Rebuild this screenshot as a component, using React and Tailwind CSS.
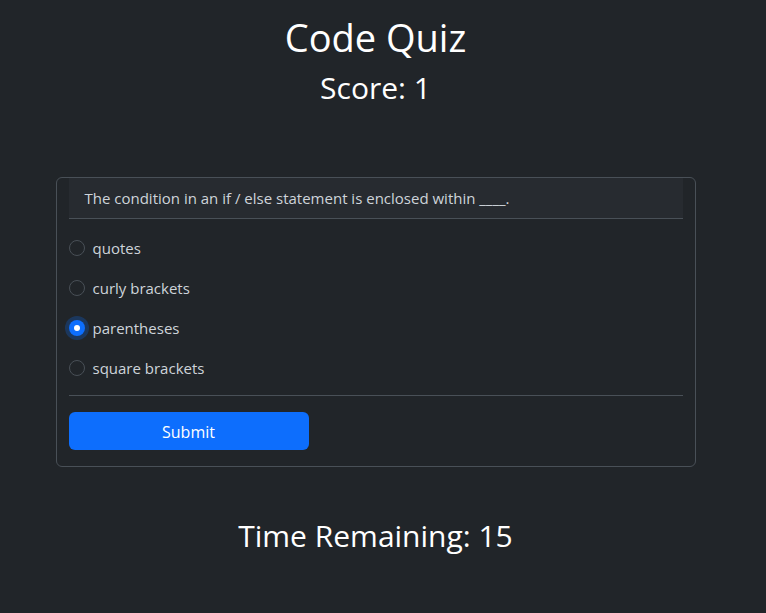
import React, {useState} from "react";

const options = ["quotes", "curly brackets", "parentheses", "square brackets"];

const App = () => {
  const [picked, setPicked] = useState("parentheses");

  return (
    <div className="min-h-screen w-full bg-[#212529] font-['Open_Sans',sans-serif] text-[#ced4da]">
      <div className="w-[751px] text-center">
        <h1 className="mb-2 pt-[13px] text-[38px] leading-[48px] text-white">Code Quiz</h1>
        <h2 className="text-[30px] leading-[38px] text-white">Score: 1</h2>

        <div className="mx-auto mt-[70px] w-[640px] rounded-md border border-[#495057] px-3 pb-4 text-left">
          <div className="border-b border-[#495057] bg-[#272b30] px-4 py-2 text-[15px] leading-[24px]">
            The condition in an if / else statement is enclosed within ____.
          </div>

          <div className="flex flex-col pt-[9px]">
            {options.map(opt => (
              <label key={opt} className="flex h-10 cursor-pointer items-center gap-2 text-[15px]">
                <span
                  className={
                    opt === picked
                      ? "flex h-4 w-4 items-center justify-center rounded-full bg-[#0d6efd] shadow-[0_0_0_4px_rgba(13,110,253,0.25)]"
                      : "h-4 w-4 rounded-full border border-[#495057] bg-[#212529]"
                  }
                >
                  {opt === picked && <span className="h-[6px] w-[6px] rounded-full bg-white" />}
                </span>
                <input
                  type="radio"
                  name="answer"
                  className="hidden"
                  checked={opt === picked}
                  onChange={() => setPicked(opt)}
                />
                {opt}
              </label>
            ))}
          </div>

          <hr className="mt-[7px] border-[#495057]" />

          <button className="mt-4 h-[38px] w-[240px] rounded-md bg-[#0d6efd] pt-[1px] text-[16px] text-white">
            Submit
          </button>
        </div>

        <h2 className="mt-[50px] text-[30px] leading-[38px] text-white">Time Remaining: 15</h2>
      </div>
    </div>
  );
};

export default App;
